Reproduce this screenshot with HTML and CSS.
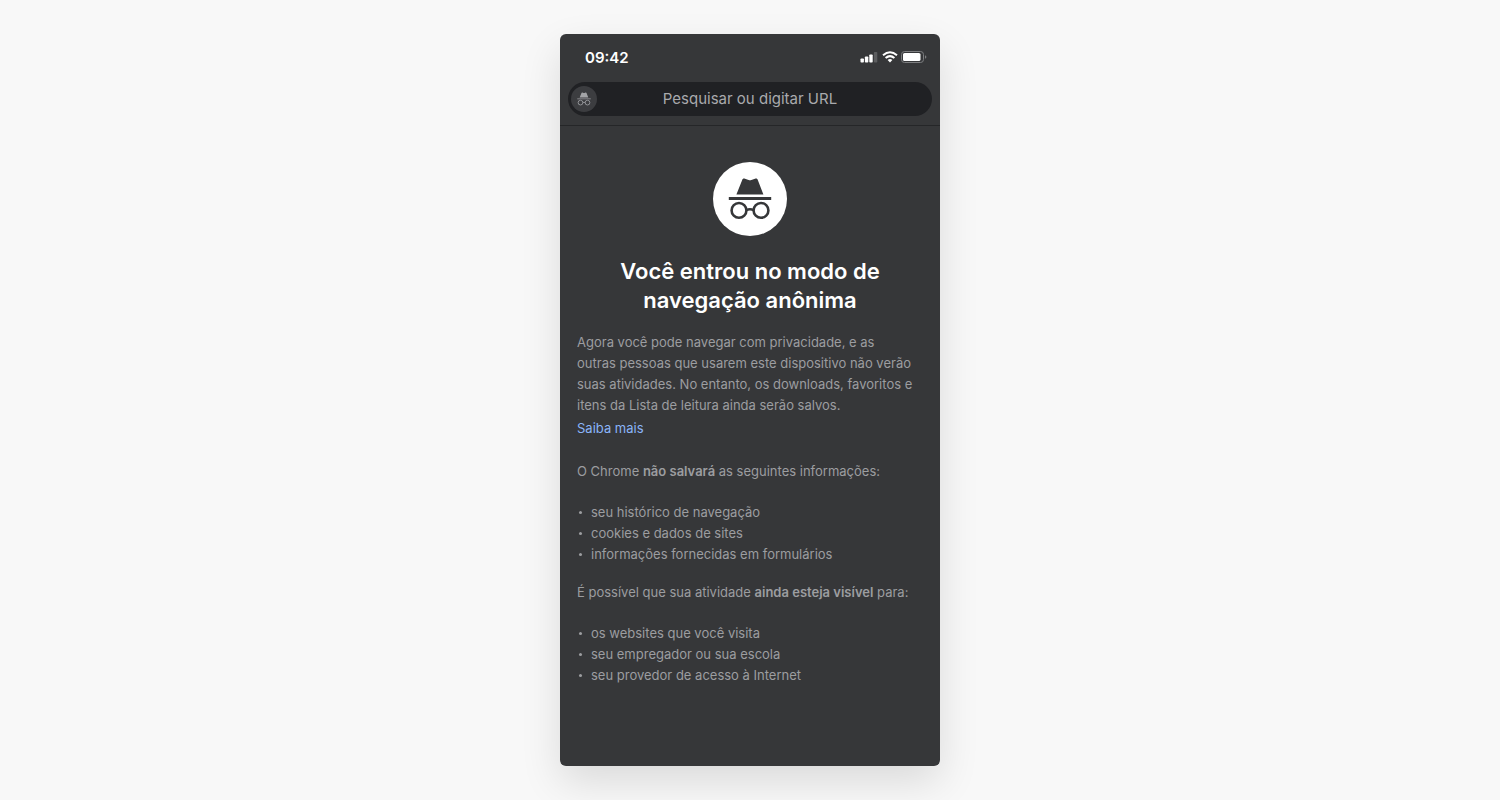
FILE: index.html
```html
<!DOCTYPE html>
<html lang="pt-BR">
<head>
  <meta charset="utf-8">
  <title>Nova guia anônima</title>
  <meta name="viewport" content="width=device-width, initial-scale=1.0">
  <link rel="stylesheet" href="styles.css">
</head>
<body>
  <svg class="sprite" width="0" height="0" aria-hidden="true">
    <symbol id="incognito" viewBox="0 0 44 42">
      <path d="M8.4 16.4 14 2.4C14.5.8 15.6.3 17 .8L20.6 2Q22 2.5 23.4 2L27 .8C28.4.3 29.5.8 30 2.4L35.4 16.4Z" fill="currentColor"/>
      <path d="M.8 19.1H43.2V22.1H.8Z" fill="currentColor"/>
      <g fill="none" stroke="currentColor" stroke-width="2.6">
        <circle cx="11" cy="32.4" r="7.4"/>
        <circle cx="33" cy="32.4" r="7.4"/>
        <path d="M18.2 32.2Q22 30.2 25.8 32.2"/>
      </g>
    </symbol>
  </svg>

  <div class="phone">
    <header class="toolbar">
      <div class="status">
        <time>09:42</time>
        <div class="status-icons">
          <svg width="19" height="12" viewBox="0 0 19 12" role="img" aria-label="Sinal">
            <g fill="#fff">
              <rect x="0.5" y="7.5" width="3.4" height="4" rx="0.8"/>
              <rect x="4.9" y="5.5" width="3.4" height="6" rx="0.8"/>
              <rect x="9.3" y="3.5" width="3.4" height="8" rx="0.8"/>
            </g>
            <rect x="13.9" y="1" width="3.4" height="10.5" rx="0.8" fill="#5c5d5f"/>
          </svg>
          <svg width="16" height="12" viewBox="0 0 16 12" role="img" aria-label="Wi-Fi">
            <g fill="none" stroke="#fff" stroke-width="2">
              <path d="M1 4.2Q8-1.8 15 4.2"/>
              <path d="M3.6 7Q8 3.2 12.4 7"/>
            </g>
            <path d="M8 11.4 5.6 9Q8 7 10.4 9Z" fill="#fff"/>
          </svg>
          <svg width="26" height="12" viewBox="0 0 26 12" role="img" aria-label="Bateria">
            <rect x="0.5" y="0.5" width="22" height="11" rx="3" fill="none" stroke="#7d7e80"/>
            <rect x="2" y="2" width="17.5" height="8" rx="1.6" fill="#fff"/>
            <path d="M24 4.2Q25.4 4.8 25.4 6T24 7.8Z" fill="#7d7e80"/>
          </svg>
        </div>
      </div>
      <form class="search">
        <span class="badge"><svg width="14" height="14"><use href="#incognito"/></svg></span>
        <input type="text" placeholder="Pesquisar ou digitar URL" aria-label="Pesquisar ou digitar URL">
      </form>
    </header>

    <main class="content">
      <div class="logo"><svg width="44" height="42"><use href="#incognito"/></svg></div>
      <h1>Você entrou no modo de navegação anônima</h1>

      <p class="intro">Agora você pode navegar com privacidade, e as<br>outras pessoas que usarem este dispositivo não verão suas atividades. No entanto, os downloads, favoritos e itens da Lista de leitura ainda serão salvos.</p>
      <a class="more" href="#">Saiba mais</a>

      <p>O Chrome <strong>não salvará</strong> as seguintes informações:</p>
      <ul>
        <li>seu histórico de navegação</li>
        <li>cookies e dados de sites</li>
        <li>informações fornecidas em formulários</li>
      </ul>

      <p>É possível que sua atividade <strong>ainda esteja visível</strong> para:</p>
      <ul>
        <li>os websites que você visita</li>
        <li>seu empregador ou sua escola</li>
        <li>seu provedor de acesso à Internet</li>
      </ul>
    </main>
  </div>
</body>
</html>
```

FILE: styles.css
```css
* {
  box-sizing: border-box;
}

body {
  margin: 0;
  padding: 34px 16px;
  min-height: 100vh;
  display: flex;
  justify-content: center;
  background-color: #f8f8f8;
  font-family: Inter, "Liberation Sans", sans-serif;
}

.sprite {
  position: absolute;
}

.phone {
  width: 100%;
  max-width: 380px;
  background-color: #363739;
  border-radius: 6px;
  box-shadow: 0 16px 40px rgba(0, 0, 0, 0.12);
  color: #9c9da0;
  overflow: hidden;
}

.toolbar {
  padding: 12px 8px 9px;
  border-bottom: 1px solid #252628;
}

.status {
  display: flex;
  align-items: center;
  justify-content: space-between;
  height: 22px;
  padding: 0 5px 0 17px;
  margin-bottom: 14px;
  color: #fff;
  font-size: 15px;
  font-weight: 600;
}

.status-icons {
  display: flex;
  align-items: center;
  gap: 3px;
}

.search {
  display: flex;
  align-items: center;
  height: 34px;
  padding: 0 3px;
  border-radius: 17px;
  background-color: #202124;
}

.badge {
  flex: none;
  display: flex;
  align-items: center;
  justify-content: center;
  width: 26px;
  height: 26px;
  border-radius: 50%;
  background-color: #3c3d40;
  color: #a3a4a7;
}

.search input {
  flex: 1;
  min-width: 0;
  padding: 0 26px 2px 0;
  border: none;
  outline: none;
  background: none;
  color: #fff;
  font-family: inherit;
  font-size: 15px;
  text-align: center;
}

.search input::placeholder {
  color: #a9aaad;
}

.content {
  padding: 36px 17px 24px;
  font-size: 13px;
  line-height: 21px;
}

.logo {
  display: flex;
  align-items: center;
  justify-content: center;
  width: 74px;
  height: 74px;
  margin: 0 auto 21px;
  border-radius: 50%;
  background-color: #fff;
  color: #363739;
}

h1 {
  max-width: 300px;
  margin: 0 auto 17px;
  color: #fff;
  font-size: 22px;
  font-weight: 600;
  line-height: 29px;
  text-align: center;
}

p {
  margin: 0 0 20px;
}

.intro {
  margin-bottom: 2px;
}

.more {
  display: block;
  width: fit-content;
  margin-bottom: 22px;
  color: #8ab4f8;
  text-decoration: none;
}

strong {
  font-weight: 600;
}

ul {
  list-style: none;
  margin: 0 0 17px;
  padding: 0;
}

li {
  display: flex;
  align-items: center;
}

li::before {
  content: "";
  width: 3px;
  height: 3px;
  margin: 0 9px 0 2px;
  border-radius: 50%;
  background-color: #9c9da0;
}
```
